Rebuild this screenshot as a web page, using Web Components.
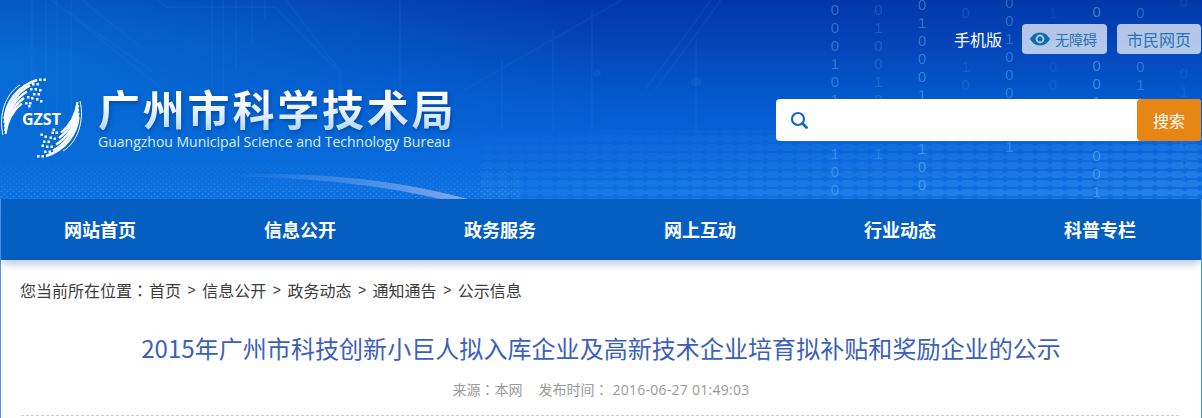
<!DOCTYPE html>
<html lang="zh-CN">
<head>
<meta charset="utf-8">
<title>广州市科学技术局</title>
<style>
html,body{margin:0;padding:0;background:#fff;}
body{font-family:"Noto Sans CJK SC","Liberation Sans",sans-serif;width:1202px;height:418px;overflow:hidden;}
</style>
</head>
<body>
<gz-page>
  <gz-header>
    <gz-logo slot="brand"></gz-logo>
    <gz-tools slot="tools"></gz-tools>
    <gz-search slot="search"></gz-search>
  </gz-header>
  <gz-main>
    <gz-nav>
      <a>网站首页</a><a>信息公开</a><a>政务服务</a><a>网上互动</a><a>行业动态</a><a>科普专栏</a>
    </gz-nav>
    <gz-crumbs items="首页|信息公开|政务动态|通知通告|公示信息"></gz-crumbs>
    <gz-article heading="2015年广州市科技创新小巨人拟入库企业及高新技术企业培育拟补贴和奖励企业的公示"></gz-article>
  </gz-main>
</gz-page>
<script>
function def(name, html){
  customElements.define(name, class extends HTMLElement{
    connectedCallback(){
      if(this.shadowRoot) return;
      const r=this.attachShadow({mode:'open'});
      r.innerHTML=typeof html==='function'?html(this):html;
    }
  });
}
const CJK='"Noto Sans CJK SC",sans-serif';
const COLON='<span lang="zh-TW" style="font-family:\'Noto Sans CJK TC\',sans-serif">：</span>';

def('gz-page',`<style>:host{display:block;width:1202px;height:418px;overflow:hidden}</style><slot></slot>`);
def('gz-main',`<style>:host{display:block;height:219px;border-left:1px solid #4f97e6;border-right:1px solid #4a9ad8}</style><slot></slot>`);

const cols=[
 [10,'000101..100',.33],
 [10,'010010..1',.18],
 [5,'010001..100',.36],
 [13,'0..10',.13],
 [3,'001000..1',.32],
 [13,'1..00',.08],
 [12,'0..001..001',.44],
 [13,'0..011',.30],
 [2,'0...01..001',.10]
];
const rain=cols.map(c=>`<div style="margin-top:${c[0]-9}px;opacity:${c[2]}">${[...c[1]].map(d=>`<b>${d==='.'?'&nbsp;':d}</b>`).join('')}</div>`).join('');

def('gz-header',`<style>
:host{display:block;position:relative;height:199px;overflow:hidden;
 background:radial-gradient(ellipse 600px 190px at 0 70px,rgba(6,112,216,.9),rgba(6,112,216,0) 100%),
 linear-gradient(180deg,#0337a7 0,#0447bb 25%,#0559ce 50%,#0967db 75%,#0b70e2 100%);}
svg.art{position:absolute;left:0;top:0;width:1202px;height:199px}
.rain{position:absolute;left:813px;top:0;width:393px;height:199px;display:grid;grid-template-columns:repeat(9,43.65px);align-items:start;color:#7fd0ff;
 font:15px/18px "Liberation Sans",sans-serif;text-align:center;}
.rain b{display:block;font-weight:400}
.wrap{position:relative;height:100%;display:grid;grid-template-columns:1fr 425px;grid-template-rows:24px 30px 87px 1fr;padding-right:1px}
.brand{grid-column:1;grid-row:1/5;margin-top:77px}
.tools{grid-column:2;grid-row:2;justify-self:end}
.search{grid-column:2;grid-row:3;align-self:end}
</style>
<svg class="art" viewBox="0 0 1202 199">
<defs>
<pattern id="h" width="15" height="9" patternUnits="userSpaceOnUse">
<path d="M0 2.200 3.500 0h8L15 2.200v2.600L11.500 7h-8L0 4.800z" fill="#5aa9f6"/>
</pattern>
<pattern id="d" width="6" height="5" patternUnits="userSpaceOnUse">
<circle cx="1.500" cy="1.500" r="1.100" fill="#7ab9f8"/><circle cx="4.500" cy="4" r="1.100" fill="#7ab9f8"/>
</pattern>
<linearGradient id="f" x1="0" y1="0" x2="1" y2="1"><stop offset="0" stop-color="#000"/><stop offset=".45" stop-color="#222"/><stop offset="1" stop-color="#555"/></linearGradient>
<mask id="m"><rect y="130" x="480" width="722" height="69" fill="url(#f)"/></mask>
<linearGradient id="fy" x1="0" y1="0" x2="0" y2="1"><stop offset="0" stop-color="#000"/><stop offset="1" stop-color="#4a4a4a"/></linearGradient>
<mask id="m2"><rect y="158" width="520" height="41" fill="url(#fy)"/></mask>
<linearGradient id="a" x1="0" y1="0" x2="1" y2="0"><stop offset="0" stop-color="#8db4ec" stop-opacity="0"/><stop offset=".55" stop-color="#7fa9ea" stop-opacity=".5"/><stop offset="1" stop-color="#86aceb" stop-opacity=".95"/></linearGradient>
</defs>
<g fill="none" stroke="#2a86e6" stroke-opacity=".12" stroke-width="2">
 <path d="M32 0V130M46 0V130M57 0V130M71 0V130M212 0V130M223 0V130M236 0V70M252 0V43M265 0V20M400 0V130"/>
 <path d="M51 0 153 72M82 0 138 45M61 7 163 90"/>
 <path d="M158 0 166 7H275L339 72V130M286 0 341 72V130"/>
 <path d="M464 90 622 0M502 60V130M553 30V130M592 10V130M645 90 711 0M655 90 721 0M696 40V130"/>
 <circle cx="597" cy="73" r="3" fill="#2a86e6" fill-opacity=".12"/><circle cx="696" cy="82" r="4" fill="#2a86e6" fill-opacity=".12"/>
</g>
<rect y="130" x="480" width="722" height="69" fill="url(#h)" mask="url(#m)"/>
<rect y="158" width="520" height="41" fill="url(#d)" mask="url(#m2)"/>
<path d="M235 174C330 172 405 182 468 199H440C385 186 320 178 235 176.500z" fill="url(#a)"/>
</svg>
<div class="rain">${rain}</div>
<div class="wrap">
 <div class="brand"><slot name="brand"></slot></div>
 <div class="tools"><slot name="tools"></slot></div>
 <div class="search"><slot name="search"></slot></div>
</div>`);

const dots=[[39,1.500],[43.500,1.500],[32,6],[36.500,6],[30,11],[34.500,11],[39,12],[33,16],[37.500,16],[27,19],[31,20],[36,21],[40,23],[25,25],[29,25],[28,28]];
const swoosh=`<g fill="none" stroke="#fff">
 <path d="M3 58C-2 38 6 16 20 8" stroke-width="1"/>
 <path d="M4.500 42C6 25 18 9 37 3" stroke-width="2.400"/>
 <path d="M4.500 46C7 30 17 15 30 8.500" stroke-width="2.400"/>
 <path d="M5 50C8 34 16 21 27 14.500" stroke-width="2.400"/>
 <path d="M5 54C8 40 14 28 24 21" stroke-width="2.400"/>
 <path d="M5.500 57C7 46 11 35 22 26.500" stroke-width="2"/>
</g><g fill="#fff">${dots.map(d=>`<rect x="${d[0]}" y="${d[1]}" width="2.500" height="2.500"/>`).join('')}</g>`;

def('gz-logo',`<style>
:host{display:flex;align-items:flex-start;color:#fff}
svg{display:block;width:84px;height:84px;flex:none}
.t{margin-left:14px;margin-top:9px}
.cn{font:700 42px/44px ${CJK};letter-spacing:2.800px;white-space:nowrap;
 background:linear-gradient(180deg,#fff 28%,#d8ebfc 72%,#b4d8f8 100%);-webkit-background-clip:text;background-clip:text;color:transparent;
 filter:drop-shadow(1px 2px 2px rgba(0,40,120,.5));}
.en{font:14px/18px "Open Sans","Liberation Sans",sans-serif;color:#dcecff;white-space:nowrap;margin-top:3px}
</style>
<svg viewBox="0 0 84 84">
 ${swoosh}
 <g transform="rotate(180 41.500 41)">${swoosh}</g>
 <text x="22" y="48" font-family="Open Sans,Liberation Sans,sans-serif" font-weight="700" font-size="16" fill="#fff">GZST</text>
</svg>
<div class="t"><div class="cn">广州市科学技术局</div><div class="en">Guangzhou Municipal Science and Technology Bureau</div></div>`);

def('gz-tools',`<style>
:host{display:flex;align-items:center;font:16px/30px ${CJK};white-space:nowrap}
.m{color:#fff;margin-right:20px}
.b{background:rgba(255,255,255,.7);color:#2a74b4;border-radius:4px;height:30px;display:flex;align-items:center;box-sizing:border-box}
.a{width:85px;font-size:14px;margin-right:10px;gap:5px;padding-left:8px}
.c{width:84px;justify-content:center}
svg{width:20px;height:14px;display:block}
</style>
<span class="m">手机版</span>
<span class="b a"><svg viewBox="0 0 20 14"><path fill-rule="evenodd" fill="#0a6cab" d="M10 .5C5.500.5 2 3.300 0 7c2 3.700 5.500 6.500 10 6.500S18 10.700 20 7C18 3.300 14.500.5 10 .500zM10 2.600a4.400 4.400 0 1 1 0 8.800 4.400 4.400 0 0 1 0-8.800z"/><circle cx="10" cy="7" r="2.500" fill="#0a6cab"/></svg>无障碍</span>
<span class="b c">市民网页</span>`);

def('gz-search',`<style>
:host{display:block;width:425px}
.box{height:42px;background:#fff;border-radius:4px;display:flex;align-items:center;justify-content:space-between}
svg{width:18px;height:18px;margin-left:14px;display:block}
.go{width:64px;height:42px;background:#e78515;color:#fff;border-radius:4px;font:16px/42px ${CJK};text-align:center}
</style>
<div class="box">
<svg viewBox="0 0 18 18" fill="none" stroke="#1367c4"><circle cx="8" cy="8" r="6" stroke-width="2.200"/><path d="M12.500 12.500 16.500 16.500" stroke-width="2.800" stroke-linecap="round"/></svg>
<div class="go">搜索</div></div>`);

def('gz-nav',`<style>
:host{display:grid;grid-template-columns:repeat(6,200px);height:61px;background:#055fc2;box-shadow:0 6px 8px -2px rgba(40,70,150,.3)}
::slotted(a){display:block;text-align:center;color:#fff;font:700 18px/61px ${CJK};padding-right:2px}
</style><slot></slot>`);

def('gz-crumbs',(h)=>{
 const items=h.getAttribute('items').split('|');
 return `<style>
:host{display:flex;align-items:center;height:60px;padding:0 19px;font:16px/20px ${CJK};color:#3c3c3c;white-space:nowrap}
i{font:14px "Liberation Sans",sans-serif;width:21.200px;text-align:center}
.l{width:129px}
</style><span class="l">您当前所在位置${COLON}</span>${items.map(x=>`<span>${x}</span>`).join('<i>&gt;</i>')}`;
});

def('gz-article',(h)=>`<style>
:host{display:block;margin:0 20px;text-align:center}
h1{margin:0;padding-top:7px;font:400 24px/42px ${CJK};letter-spacing:.06px;color:#3b60ba;white-space:nowrap}
p{margin:10px 0 0;font:14px/20px ${CJK};color:#9a9a9a;white-space:nowrap}
.d{font-family:"Open Sans","Liberation Sans",sans-serif;letter-spacing:.25px;margin-left:4px}
.g{display:inline-block;width:16px}
.r{height:1px;margin-top:15px;background:repeating-linear-gradient(90deg,#ccc 0 3px,transparent 3px 5px)}
</style><h1>${h.getAttribute('heading')}</h1><p>来源${COLON}本网<span class="g"></span>发布时间${COLON}<span class="d">2016-06-27 01:49:03</span></p><div class="r"></div>`);
</script>
</body>
</html>
